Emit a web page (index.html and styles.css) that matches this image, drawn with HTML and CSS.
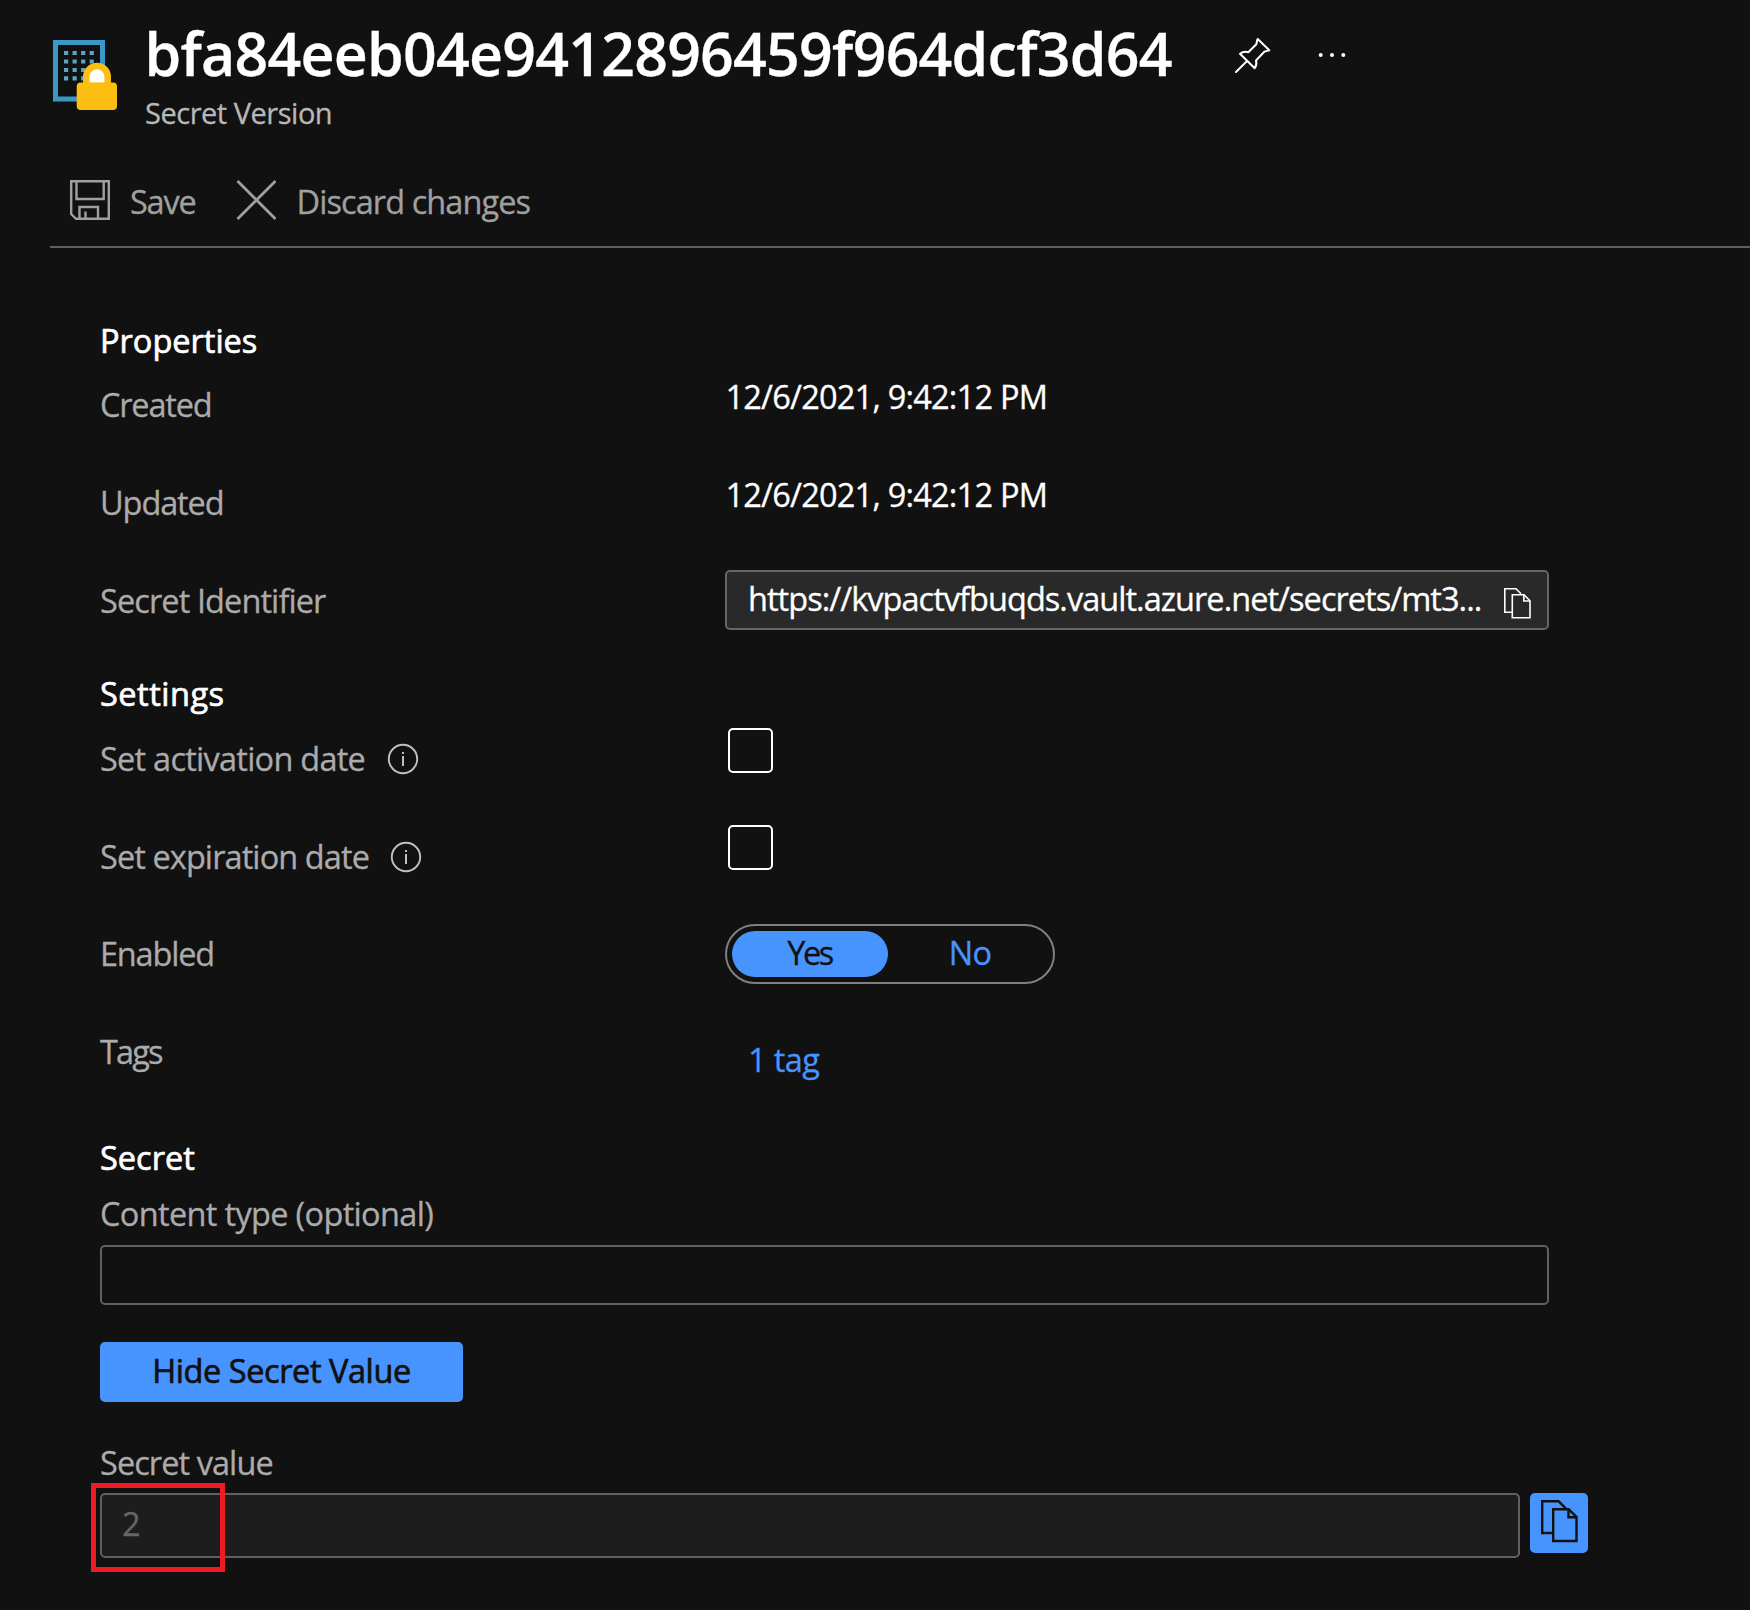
FILE: index.html
```html
<!DOCTYPE html>
<html lang="en">
<head>
<meta charset="utf-8">
<title>Secret Version</title>
<link rel="stylesheet" href="styles.css">
</head>
<body>
<header class="header">
  <svg class="header-icon" viewBox="0 0 66 72" width="66" height="72">
    <rect x="3.5" y="2.5" width="47" height="56.500" fill="none" stroke="#3999c6" stroke-width="5"/>
    <g fill="none" stroke="#59a5c2" stroke-width="4.200" stroke-dasharray="4.200 4.350">
      <path d="M12 13h31"/><path d="M12 21.500h31"/><path d="M12 30h31"/><path d="M12 38.300h31"/>
    </g>
    <path d="M34.300 46V36.500a10.700 10.500 0 0 1 21.400 0v9.500z" fill="#fff" stroke="#fcbe10" stroke-width="6.500"/>
    <rect x="24.700" y="42.500" width="40.300" height="27.500" rx="4" fill="#fcbe10"/>
  </svg>
  <div class="header-text">
    <div class="title-row">
      <h1 class="title">bfa84eeb04e9412896459f964dcf3d64</h1>
      <svg class="pin" viewBox="0 0 38 38" width="38" height="38" fill="none" stroke="#fff" stroke-width="2" stroke-linejoin="round" stroke-linecap="round">
        <path d="M23.700 2L35.300 13.300C33.300 14 31.500 14 30.300 14.700L22 23.500C23 27 22.300 29 20.700 31.300L6 16.700C8.500 14.800 11.500 14.500 14.300 15.300L22.300 7.300C22.800 5.500 22.800 4 23.700 2z"/>
        <path d="M13 24L2 35"/>
      </svg>
      <svg class="more" viewBox="0 0 28 6" width="28" height="6" fill="#fff"><circle cx="2.700" cy="3" r="2"/><circle cx="14" cy="3" r="2"/><circle cx="25.300" cy="3" r="2"/></svg>
    </div>
    <div class="subtitle">Secret Version</div>
  </div>
</header>
<nav class="toolbar">
  <button class="tool tool-save">
    <svg viewBox="0 0 40 40" width="40" height="40" fill="none" stroke="#a0a0a0" stroke-width="2.400">
      <path d="M1.200 1.200H38.800V38.800H6L1.200 34z"/><path d="M6.500 1.500V19H33.700V1.500"/><path d="M9.500 38.500V27H28V38.500"/><path d="M15.500 38V31.500"/>
    </svg>
    <span>Save</span>
  </button>
  <button class="tool tool-discard">
    <svg viewBox="0 0 40 40" width="40" height="40" fill="none" stroke="#a0a0a0" stroke-width="2.800"><path d="M1.500 1L39.500 39M39.500 1L1.500 39"/></svg>
    <span>Discard changes</span>
  </button>
</nav>
<main class="content">
  <section class="properties">
    <h2 class="heading">Properties</h2>
    <div class="row"><span class="label label-created">Created</span><span class="value">12/6/2021, 9:42:12 PM</span></div>
    <div class="row"><span class="label label-updated">Updated</span><span class="value">12/6/2021, 9:42:12 PM</span></div>
    <div class="row"><span class="label label-id">Secret Identifier</span>
      <div class="copy-field"><span class="url">https://kvpactvfbuqds.vault.azure.net/secrets/mt3...</span>
        <svg class="copy-small" viewBox="0 0 27 31" width="27" height="31" fill="none" stroke="#fff" stroke-width="1.600">
          <path d="M8 24.200H.8V.8H12L17 5.800"/><path d="M8.300 6.800H20L26 12.800V29.800H8.300z"/><path d="M19.800 7V13H26"/>
        </svg>
      </div>
    </div>
  </section>
  <section class="settings">
    <h2 class="heading heading-settings">Settings</h2>
    <div class="row row-check"><span class="label label-act">Set activation date</span>
      <svg class="info" viewBox="0 0 32 32" width="32" height="32"><circle cx="16" cy="16" r="14.200" fill="none" stroke="#c0c0c0" stroke-width="1.900"/><path d="M16 13v10M16 9v2" stroke="#c0c0c0" stroke-width="2"/></svg>
      <span class="checkbox"></span></div>
    <div class="row row-check row-expiry"><span class="label label-exp">Set expiration date</span>
      <svg class="info" viewBox="0 0 32 32" width="32" height="32"><circle cx="16" cy="16" r="14.200" fill="none" stroke="#c0c0c0" stroke-width="1.900"/><path d="M16 13v10M16 9v2" stroke="#c0c0c0" stroke-width="2"/></svg>
      <span class="checkbox"></span></div>
    <div class="row row-enabled"><span class="label label-enabled">Enabled</span>
      <div class="toggle"><span class="option option-on">Yes</span><span class="option">No</span></div></div>
    <div class="row row-tags"><span class="label label-tags">Tags</span><a class="tag-link">1 tag</a></div>
  </section>
  <section class="secret">
    <h2 class="heading">Secret</h2>
    <label class="label label-type">Content type (optional)</label>
    <div class="input"></div>
    <button class="primary">Hide Secret Value</button>
    <label class="label label-value">Secret value</label>
    <div class="secret-row">
      <div class="textarea">2<span class="highlight"></span></div>
      <button class="copy-button">
        <svg viewBox="0 0 38 44" width="38" height="44" fill="none" stroke="#111" stroke-width="2.400">
          <path d="M12 34H2.200V2.200H18.500L26 9.700"/><path d="M13.200 10.200H28.700L36.500 18V42H13.200z"/><path d="M28.500 10V18.200H36.500"/>
        </svg>
      </button>
    </div>
  </section>
</main>
</body>
</html>
```
FILE: styles.css
```css
*, *::before { box-sizing: border-box; }

body {
  margin: 0;
  height: 1610px;
  overflow: hidden;
  background: #111;
  color: #fff;
  font: 400 32.5px/46px "Open Sans", "Noto Sans", sans-serif;
  -webkit-text-stroke-width: 0.3px;
}

button {
  margin: 0;
  padding: 0;
  border: 0;
  background: none;
  font: inherit;
}

svg { display: block; flex: none; }

/* Header */
.header { display: flex; height: 154px; padding: 13px 0 0 52px; }
.header-icon { margin: 27px 26.5px 0 0; }
.title-row { display: flex; height: 80px; }
.title {
  margin: 0;
  width: 1026px;
  font-size: 59px;
  font-weight: 600;
  line-height: 80px;
  letter-spacing: -0.75px;
  white-space: nowrap;
}
.pin { margin: 24px 0 0 63px; }
.more { margin: 39px 0 0 46px; }
.subtitle {
  padding-left: 0.5px;
  color: #b8b8b8;
  font-size: 29px;
  line-height: 40px;
  letter-spacing: -0.48px;
}

/* Toolbar */
.toolbar {
  display: flex;
  height: 94px;
  margin-left: 50px;
  padding: 24px 0 0 20px;
  border-bottom: 2px solid #606060;
}
.tool { display: flex; height: 46px; color: #a0a0a0; white-space: nowrap; }
.tool svg { margin-top: 2px; }
.tool span { padding-top: 1px; }
.tool-save { width: 166px; gap: 20px; letter-spacing: -1.2px; }
.tool-discard { gap: 20.5px; letter-spacing: -0.92px; }

/* Form */
.content { padding: 70px 0 0 100px; }
.heading {
  margin: 0;
  height: 56px;
  font-size: 32.5px;
  font-weight: 500;
  line-height: 46px;
  -webkit-text-stroke-width: 0.7px;
}
.heading-settings { height: 57px; letter-spacing: 0.5px; }
.row { display: flex; height: 98px; }
.row > .label { margin-top: 8px; }
.row > :last-child { margin-left: auto; }
.properties .row, .settings .row { width: 1449px; }
.label { display: block; color: #ababab; white-space: nowrap; }
.label-created, .label-enabled { letter-spacing: -1.2px; }
.label-updated { letter-spacing: -1.1px; }
.label-id { letter-spacing: -0.9px; }
.label-act { letter-spacing: -0.75px; }
.label-exp { letter-spacing: -0.91px; }
.label-tags { letter-spacing: -1.9px; }
.value { width: 824px; padding-left: 0.5px; letter-spacing: -0.78px; }
.copy-field {
  display: flex;
  width: 824px;
  height: 60px;
  padding: 4px 0 0 21px;
  border: 2px solid #666;
  border-radius: 5px;
  background: #292929;
}
.url { width: 756px; letter-spacing: -0.96px; white-space: nowrap; }
.copy-small { margin-top: 12px; }

.settings { padding-top: 3px; }
.row.row-check { height: 97px; }
.row-check > .label { margin-top: 8px; }
.info { margin: 15px 0 0 22px; }
.checkbox {
  width: 821px;
  height: 45px;
}
.checkbox::before {
  content: "";
  display: block;
  width: 45px;
  height: 45px;
  border: 2px solid #fff;
  border-radius: 5px;
}
.row.row-expiry { height: 99px; }
.row-expiry > .label { margin-top: 9px; }
.row-expiry > .info { margin-top: 16px; margin-left: 21px; }
.row-enabled > .label, .row-tags > .label { margin-top: 7px; }
.toggle {
  display: flex;
  width: 330px;
  height: 60px;
  padding: 5px;
  border: 2px solid #808080;
  border-radius: 30px;
}
.row-enabled > .toggle { margin-right: 494px; }
.option {
  flex: none;
  width: 156px;
  height: 46px;
  border-radius: 23px;
  color: #4894fe;
  line-height: 44px;
  text-align: center;
  letter-spacing: -0.8px;
}
.option-on { padding-right: 1px; background: #4894fe; color: #111; letter-spacing: -2.4px; }
.option:last-child { width: 160px; padding-left: 4px; }
.tag-link { width: 801px; padding-top: 15px; color: #4894fe; letter-spacing: -0.6px; }

/* Secret */
.secret { padding-top: 14px; }
.secret .heading { padding-top: 1px; }
.label-type { height: 55px; padding-top: 1px; letter-spacing: -0.66px; }
.input {
  width: 1449px;
  height: 60px;
  border: 2px solid #606060;
  border-radius: 5px;
}
.primary {
  display: block;
  width: 363px;
  height: 60px;
  margin: 37px 0;
  padding-bottom: 2px;
  border-radius: 5px;
  background: #4894fe;
  color: #111;
  font-weight: 500;
  letter-spacing: -0.43px;
  -webkit-text-stroke-width: 0.7px;
}
.label-value { height: 54px; padding-top: 1px; letter-spacing: -0.93px; }
.secret-row { display: flex; gap: 10px; }
.textarea {
  position: relative;
  width: 1420px;
  height: 65px;
  padding: 6px 20px;
  border: 2px solid #606060;
  border-radius: 5px;
  background: #1d1d1d;
  color: #666;
}
.highlight {
  position: absolute;
  top: -12px;
  left: -11px;
  width: 134px;
  height: 89px;
  border: 5px solid #ed1c24;
}
.copy-button {
  width: 58px;
  height: 60px;
  padding: 6px 0 0 10px;
  border-radius: 5px;
  background: #4894fe;
}
.copy-button svg { margin-bottom: 10px; }
```
